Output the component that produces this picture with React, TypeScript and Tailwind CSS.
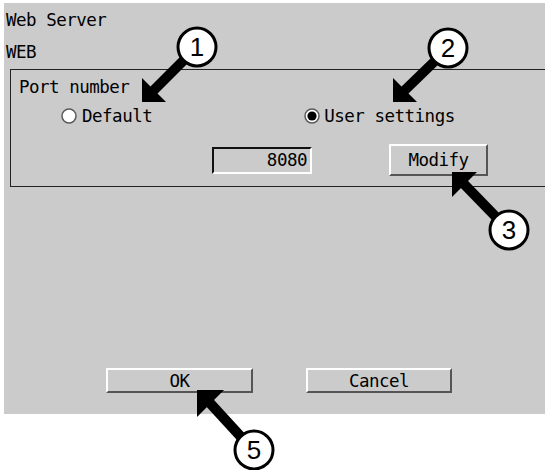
import React from "react";

const mono = { fontFamily: '"DejaVu Sans Mono", "Liberation Mono", monospace' };

function Radio({ checked }: { checked?: boolean }) {
  return (
    <svg width="16" height="16" viewBox="0 0 16 16" className="shrink-0">
      <circle cx="8" cy="8" r="7" fill="#fff" stroke="#5a5a5a" strokeWidth="1.5" />
      {checked && <circle cx="8" cy="8" r="4.6" fill="#000" />}
    </svg>
  );
}

function Button({ label, w }: { label: string; w: string }) {
  return (
    <div
      className={`${w} flex items-center justify-center border-2 border-t-white border-l-white border-r-[#555] border-b-[#555] bg-[#cbcbcb]`}
    >
      {label}
    </div>
  );
}

type Callout = { n: string; cx: number; cy: number; tip: [number, number]; a: [number, number]; b: [number, number]; from: [number, number]; to: [number, number] };

const callouts: Callout[] = [
  { n: "1", cx: 197, cy: 47, tip: [142, 102], a: [142, 78], b: [166, 102], from: [152, 92], to: [186, 58] },
  { n: "2", cx: 448, cy: 48, tip: [393, 102], a: [393, 78], b: [417, 102], from: [404, 91], to: [437, 59] },
  { n: "3", cx: 509, cy: 230, tip: [452, 172], a: [452, 197], b: [477, 172], from: [463, 183], to: [497, 218] },
  { n: "5", cx: 254, cy: 450, tip: [197, 390], a: [197, 417], b: [224, 390], from: [209, 402], to: [242, 438] },
];

function Callouts() {
  return (
    <svg className="absolute left-0 top-0" width="545" height="470" viewBox="0 0 545 470">
      {callouts.map((c) => (
        <g key={c.n}>
          <line x1={c.from[0]} y1={c.from[1]} x2={c.to[0]} y2={c.to[1]} stroke="#000" strokeWidth="10" />
          <polygon points={`${c.tip.join(",")} ${c.a.join(",")} ${c.b.join(",")}`} fill="#000" />
          <circle cx={c.cx} cy={c.cy} r="19" fill="#fff" stroke="#000" strokeWidth="3" />
          <text
            x={c.cx}
            y={c.cy + 9}
            textAnchor="middle"
            fontSize="26"
            fontFamily='"Liberation Sans", Arial, sans-serif'
            fill="#000"
          >
            {c.n}
          </text>
        </g>
      ))}
    </svg>
  );
}

export default function App() {
  return (
    <div className="relative h-[470px] w-[545px] overflow-hidden bg-white">
      <div
        className="ml-[4px] mt-[3px] flex h-[411px] w-[541px] flex-col overflow-hidden bg-[#cbcbcb] text-[17.5px] leading-[20px] tracking-[-0.5px] text-black"
        style={mono}
      >
        <div className="pl-[2px] pt-[7px]">Web Server</div>
        <div className="mt-[12px] pl-[2px]">WEB</div>

        <div className="ml-[6px] mt-[7px] w-[560px] shrink-0 border border-[#222] pb-[10px] pl-[8px] pt-[7px]">
          <div>Port number</div>
          <div className="mt-[9px] flex items-center">
            <div className="ml-[42px] flex items-center gap-[5px]">
              <Radio />
              <span>Default</span>
            </div>
            <div className="ml-[152px] flex items-center gap-[4px]">
              <Radio checked />
              <span>User settings</span>
            </div>
          </div>
          <div className="mt-[18px] flex items-center">
            <div className="ml-[193px] flex h-[27px] w-[100px] items-center justify-end border-2 border-t-[#111] border-l-[#111] border-r-white border-b-white pr-[3px]">
              8080
            </div>
            <div className="ml-[77px]">
              <div className="flex h-[32px] w-[99px] items-center justify-center border-2 border-t-white border-l-white border-r-[#555] border-b-[#555]">
                Modify
              </div>
            </div>
          </div>
        </div>

        <div className="mt-auto mb-[21px] flex gap-[53px] pl-[102px]">
          <div className="h-[25px]">
            <Button label="OK" w="w-[147px] h-[25px]" />
          </div>
          <div className="h-[25px]">
            <Button label="Cancel" w="w-[146px] h-[25px]" />
          </div>
        </div>
      </div>
      <Callouts />
    </div>
  );
}
